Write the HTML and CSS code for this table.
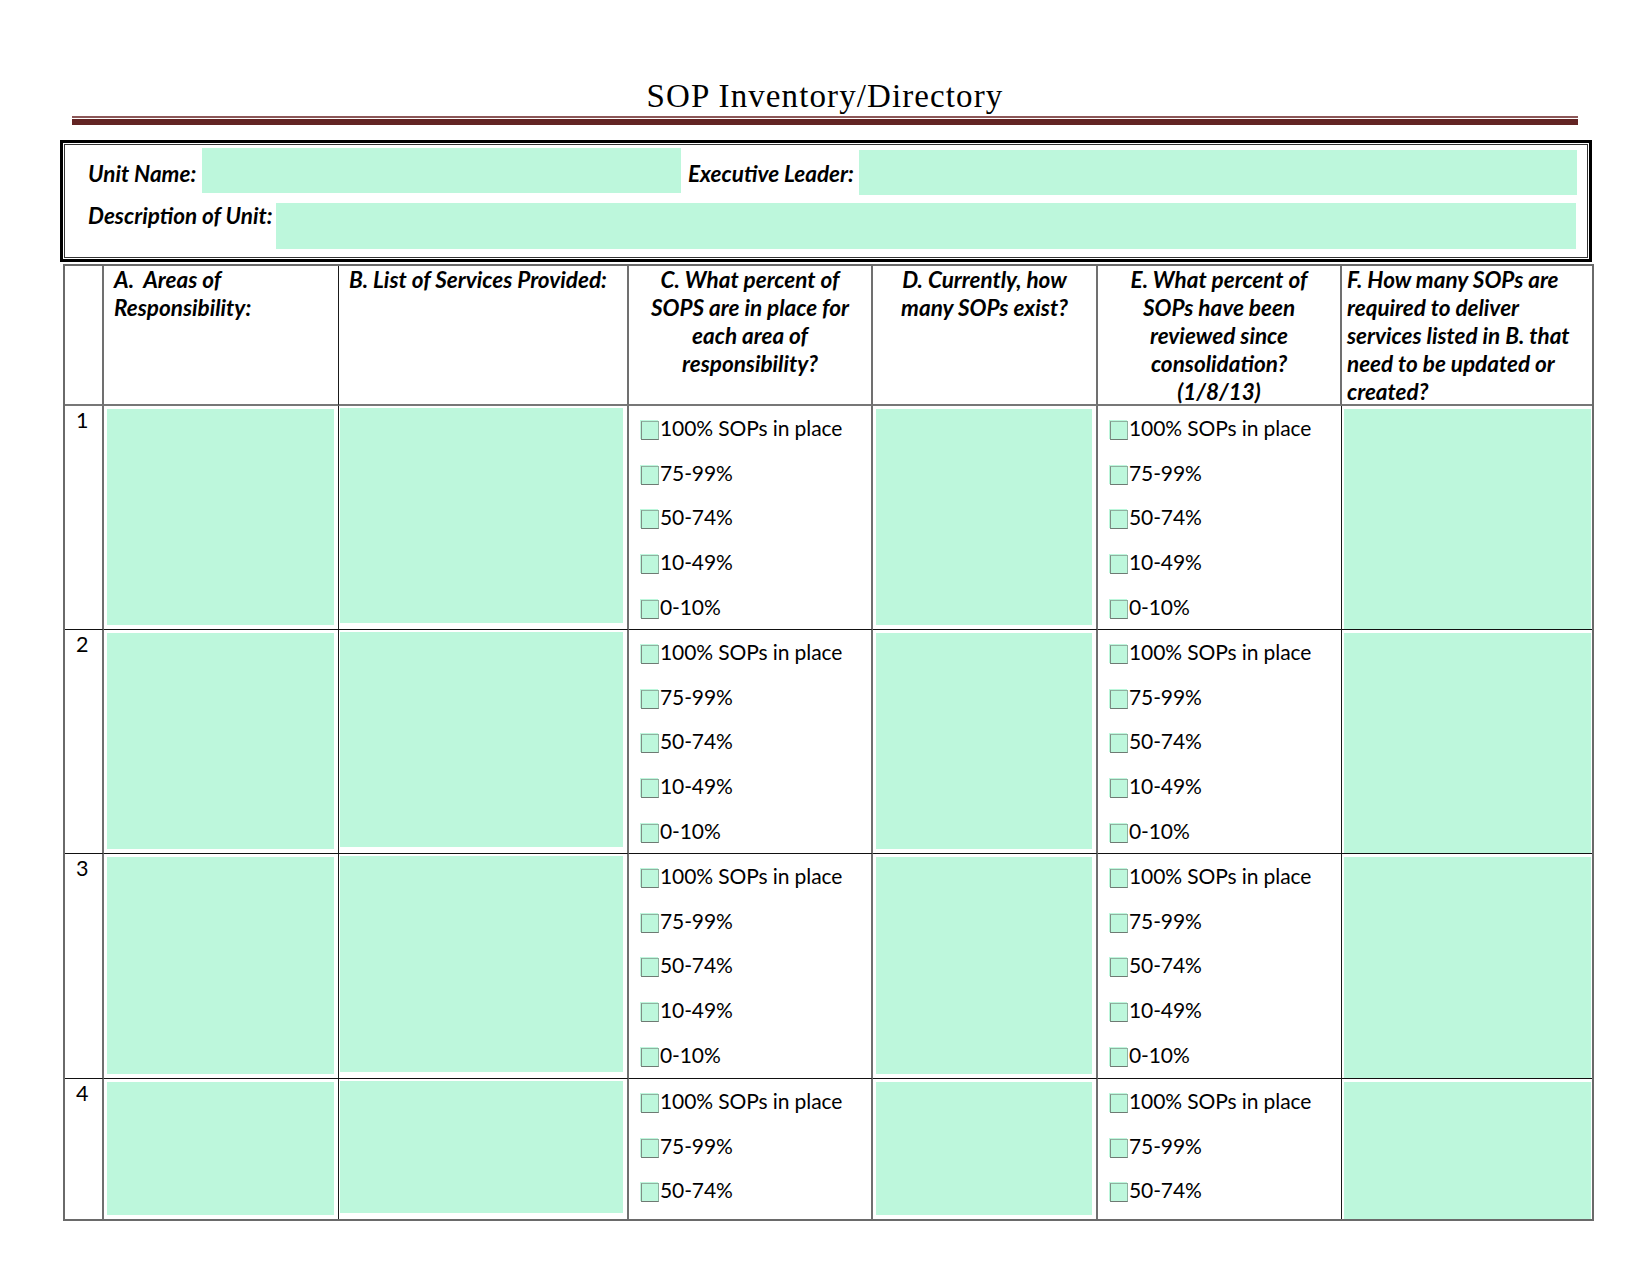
FILE: index.html
```html
<!DOCTYPE html>
<html lang="en">
<head>
<meta charset="utf-8">
<title>SOP Inventory/Directory</title>
<link rel="stylesheet" href="styles.css">
</head>
<body>
<div class="page">
  <h1 class="title">SOP Inventory/Directory</h1>
  <div class="rule"></div>

  <div class="info">
    <div class="info-row r1">
      <span class="lbl l-unit">Unit Name:</span>
      <span class="fld f-unit"></span>
      <span class="lbl l-exec">Executive Leader:</span>
      <span class="fld f-exec"></span>
    </div>
    <div class="info-row r2">
      <span class="lbl l-desc">Description of Unit:</span>
      <span class="fld f-desc"></span>
    </div>
  </div>

  <div class="grid">
    <div class="c hd v2"></div>
    <div class="c hd">A.&nbsp; Areas of<br>Responsibility:</div>
    <div class="c hd v2">B. List of Services Provided:</div>
    <div class="c hd ctr v2">C. What percent of<br>SOPS are in place for<br>each area of<br>responsibility?</div>
    <div class="c hd ctr v2">D. Currently, how<br>many SOPs exist?</div>
    <div class="c hd ctr v2">E. What percent of<br>SOPs have been<br>reviewed since<br>consolidation?<br>(1/8/13)</div>
    <div class="c hd last hf">F. How many SOPs are<br>required to deliver<br>services listed in B. that<br>need to be updated or<br>created?</div>

    <div class="c num v2">1</div>
    <div class="c g"><div class="fill"></div></div>
    <div class="c g v2"><div class="fill fb"></div></div>
    <div class="c ck v2">
      <div><span class="cb"></span>100% SOPs in place</div>
      <div><span class="cb"></span>75-99%</div>
      <div><span class="cb"></span>50-74%</div>
      <div><span class="cb"></span>10-49%</div>
      <div><span class="cb"></span>0-10%</div>
    </div>
    <div class="c g v2"><div class="fill"></div></div>
    <div class="c ck">
      <div><span class="cb"></span>100% SOPs in place</div>
      <div><span class="cb"></span>75-99%</div>
      <div><span class="cb"></span>50-74%</div>
      <div><span class="cb"></span>10-49%</div>
      <div><span class="cb"></span>0-10%</div>
    </div>
    <div class="c g last"><div class="fill fl"></div></div>

    <div class="c num v2">2</div>
    <div class="c g"><div class="fill"></div></div>
    <div class="c g v2"><div class="fill fb"></div></div>
    <div class="c ck v2">
      <div><span class="cb"></span>100% SOPs in place</div>
      <div><span class="cb"></span>75-99%</div>
      <div><span class="cb"></span>50-74%</div>
      <div><span class="cb"></span>10-49%</div>
      <div><span class="cb"></span>0-10%</div>
    </div>
    <div class="c g v2"><div class="fill"></div></div>
    <div class="c ck">
      <div><span class="cb"></span>100% SOPs in place</div>
      <div><span class="cb"></span>75-99%</div>
      <div><span class="cb"></span>50-74%</div>
      <div><span class="cb"></span>10-49%</div>
      <div><span class="cb"></span>0-10%</div>
    </div>
    <div class="c g last"><div class="fill fl"></div></div>

    <div class="c num v2">3</div>
    <div class="c g"><div class="fill"></div></div>
    <div class="c g v2"><div class="fill fb"></div></div>
    <div class="c ck v2">
      <div><span class="cb"></span>100% SOPs in place</div>
      <div><span class="cb"></span>75-99%</div>
      <div><span class="cb"></span>50-74%</div>
      <div><span class="cb"></span>10-49%</div>
      <div><span class="cb"></span>0-10%</div>
    </div>
    <div class="c g v2"><div class="fill"></div></div>
    <div class="c ck">
      <div><span class="cb"></span>100% SOPs in place</div>
      <div><span class="cb"></span>75-99%</div>
      <div><span class="cb"></span>50-74%</div>
      <div><span class="cb"></span>10-49%</div>
      <div><span class="cb"></span>0-10%</div>
    </div>
    <div class="c g last"><div class="fill fl"></div></div>

    <div class="c num v2 end">4</div>
    <div class="c g end"><div class="fill"></div></div>
    <div class="c g v2 end"><div class="fill fb"></div></div>
    <div class="c ck v2 end">
      <div><span class="cb"></span>100% SOPs in place</div>
      <div><span class="cb"></span>75-99%</div>
      <div><span class="cb"></span>50-74%</div>
    </div>
    <div class="c g v2 end"><div class="fill"></div></div>
    <div class="c ck end">
      <div><span class="cb"></span>100% SOPs in place</div>
      <div><span class="cb"></span>75-99%</div>
      <div><span class="cb"></span>50-74%</div>
    </div>
    <div class="c g last end"><div class="fill fl"></div></div>
  </div>
</div>
</body>
</html>
```
FILE: styles.css
```css
* { box-sizing: border-box; }

body {
  margin: 0;
  background: #fff;
  color: #000;
  font-family: Lato, "Open Sans", sans-serif;
}

.title {
  margin: 76px 0 0 72px;
  width: 1506px;
  height: 40px;
  font: 400 33px/40px "Liberation Serif", serif;
  letter-spacing: 1.1px;
  text-align: center;
}

.rule {
  margin-left: 72px;
  width: 1506px;
  height: 9px;
  border-top: 2px solid #8c5757;
  border-bottom: 6px solid #632423;
}

.info {
  margin: 15px 0 0 60px;
  width: 1532px;
  height: 122px;
  border: 3px solid #000;
  box-shadow: inset 0 0 0 1px #fff, inset 0 0 0 2px #333;
  padding-left: 25px;
}

.info-row { display: flex; align-items: flex-start; }
.r1 { height: 52px; }

.lbl {
  font: italic 700 22.5px/28px Lato, sans-serif;
  white-space: nowrap;
}

.fld { display: block; background: #bdf7dc; }

.l-unit { width: 114px; margin-top: 17px; }
.f-unit { width: 479px; height: 45px; margin-top: 5px; }
.l-exec { width: 171px; margin-left: 7px; margin-top: 17px; }
.f-exec { width: 718px; height: 45px; margin-top: 7px; }
.l-desc { width: 188px; margin-top: 7px; }
.f-desc { width: 1300px; height: 46px; margin-top: 8px; }

.grid {
  margin: 2px 0 0 63px;
  width: 1531px;
  border: 2px solid #6a6a6a;
  display: grid;
  grid-template-columns: 39px 235px 290px 244px 225px 244px 250px;
  grid-template-rows: 140px 224px 224px 225px 140px;
}

.c {
  border-right: 1px solid #1a1a1a;
  border-bottom: 1px solid #111;
  overflow: hidden;
}
.c.v2 { border-right: 2px solid #707070; }
.c.last { border-right: none; }
.c.end { border-bottom: none; }

.hd {
  border-bottom: 2px solid #777;
  font: italic 700 22.5px/28px Lato, sans-serif;
  white-space: nowrap;
  padding: 0 2px 0 10px;
}
.hd.ctr { text-align: center; padding: 0; }
.hd.hf { padding-left: 5px; }

.num {
  font-size: 21.5px;
  line-height: 28px;
  padding-left: 11px;
}

.g { display: flex; }
.fill {
  flex: 1;
  margin: 3px 4px 4px 3px;
  background: #bdf7dc;
}
.fill.fb { margin: 2px 4px 6px 1px; }
.fill.fl { margin: 3px 1px 0 2px; }

.ck {
  padding-left: 11px;
  font-size: 21px;
  letter-spacing: -0.1px;
  white-space: nowrap;
}
.ck > div {
  height: 44.7px;
  line-height: 44.7px;
}

.cb {
  display: inline-block;
  width: 18px;
  height: 19px;
  margin-right: 2px;
  vertical-align: -3px;
  background: #bdf7dc;
  padding: 1px 1px 1px 1px;
}
.cb::after {
  content: "";
  display: block;
  width: 100%;
  height: 100%;
  border: 1px solid #8fb1a0;
  border-left-color: #7f8f86;
  border-bottom-color: #6e7a73;
}
```
